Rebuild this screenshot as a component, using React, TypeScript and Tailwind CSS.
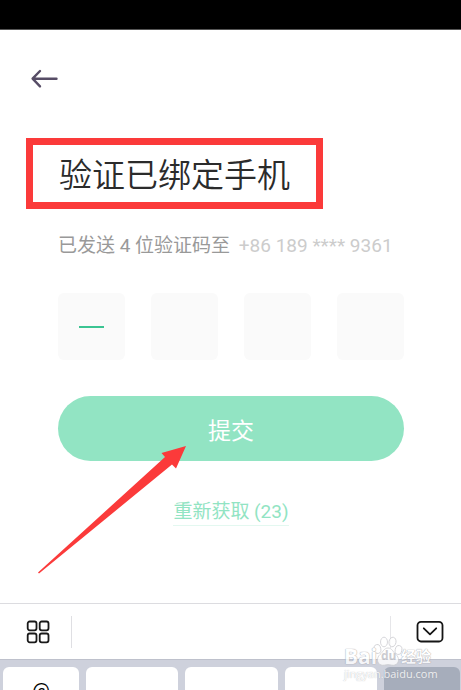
import React from 'react';

const digits = ['第一位', '第二位', '第三位', '第四位'];

function BackIcon() {
  return (
    <svg className="block h-5 w-7" viewBox="0 0 28 20" fill="none" stroke="#574d66" strokeWidth="2.4" strokeLinecap="round" strokeLinejoin="round">
      <path d="M10 2 2.600 9.700 10 17.400M3 9.700h23.500" />
    </svg>
  );
}

function GridIcon() {
  return (
    <svg className="block h-6 w-6" viewBox="0 0 24 24" fill="none" stroke="#1a1a1a" strokeWidth="1.8">
      <rect x="1.700" y="1.500" width="8.800" height="8.800" rx="2" />
      <rect x="13.700" y="1.500" width="8.800" height="8.800" rx="2" />
      <rect x="1.700" y="13.500" width="8.800" height="8.800" rx="2" />
      <rect x="13.700" y="13.500" width="8.800" height="8.800" rx="2" />
    </svg>
  );
}

function HideKeyboardIcon() {
  return (
    <svg className="block h-6 w-7" viewBox="0 0 28 24" fill="none" stroke="#151515" strokeWidth="1.8" strokeLinecap="round" strokeLinejoin="round">
      <rect x="1.500" y="1.800" width="25" height="19.700" rx="3.500" />
      <path d="M7.800 8.300 14 14.300l6.200-6" />
    </svg>
  );
}

function Pointer() {
  return (
    <svg className="pointer-events-none absolute top-[49px] -left-5 h-[130px] w-[150px]" viewBox="0 0 150 130" aria-hidden="true">
      <path d="M148 1 123.500 8 127 12 0 127.500 1 128.500 134 19.500 138 23.500Z" fill="#fb3a3a" />
    </svg>
  );
}

function Watermark() {
  return (
    <div className="pointer-events-none absolute top-[43px] right-[26px] w-[91px] font-['Open_Sans','Noto_Sans_CJK_SC',sans-serif] text-white opacity-80" aria-hidden="true">
      <svg className="absolute top-[-11px] left-[29px] h-[32px] w-[30px]" viewBox="0 0 30 32" fill="#ffffff" stroke="#c9c9ce" strokeWidth="0.9">
        <ellipse cx="4.500" cy="14" rx="3.300" ry="4.500" transform="rotate(-12 4.500 14)" />
        <ellipse cx="11" cy="7" rx="3.500" ry="4.800" />
        <ellipse cx="19.500" cy="7" rx="3.500" ry="4.800" transform="rotate(10 19.500 7)" />
        <ellipse cx="25.500" cy="15" rx="3.300" ry="4.500" transform="rotate(12 25.500 15)" />
        <path d="M15 13c4 0 5 4 8 6.500 3.500 3 3.500 9-1 10.500-2.500.8-4.500-.3-7-.3s-4.500 1.100-7 .3c-4.500-1.500-4.500-7.500-1-10.500C10 17 11 13 15 13Z" />
      </svg>
      <div className="relative grid h-5 grid-cols-[37px_20px_31px] items-center leading-5 font-bold [text-shadow:0_0_1px_#9a9aa2,0_0_1px_#9a9aa2]">
        <span className="text-[21px]">Bai</span>
        <span className="text-xs text-[#c0c0c6] [text-shadow:none]">du</span>
        <span className="text-[15px]">经验</span>
      </div>
      <div className="relative mt-0.5 text-[11px] leading-3 whitespace-nowrap [text-shadow:0_0_1px_#9a9aa2]">jingyan.baidu.com</div>
    </div>
  );
}

export default function App() {
  return (
    <div className="flex h-screen flex-col overflow-hidden bg-white font-['Roboto','Noto_Sans_CJK_SC',sans-serif]">
      <div className="h-[30px] shrink-0 border-b border-[#555555] bg-black" />

      <header className="flex h-[98px] shrink-0 items-center px-[30px]">
        <button type="button" aria-label="返回">
          <BackIcon />
        </button>
      </header>

      <main className="min-h-0 flex-1 pt-5 pr-[57px] pl-[58px]">
        <div className="relative w-fit px-px pt-[3px]">
          <h1 className="text-[33px] leading-[50px] font-[350] whitespace-nowrap text-[#2b2b2b]">验证已绑定手机</h1>
          <div className="pointer-events-none absolute -inset-x-8 top-[-10px] h-[71px] border-7 border-[#fb3a3a]" />
        </div>

        <p className="mt-[30px] text-[19px] leading-[30px] whitespace-nowrap text-[#999999]">
          已发送 4 位验证码至 <span className="ml-1 text-[#cccccc]">+86 189 **** 9361</span>
        </p>

        <form onSubmit={(e) => e.preventDefault()}>
          <div className="mt-8 grid grid-cols-4 gap-[26px]">
            {digits.map((name, i) => (
              <label key={name} className="relative block">
                <input
                  type="text"
                  inputMode="numeric"
                  maxLength={1}
                  aria-label={name}
                  className="block aspect-square w-full rounded-md bg-[#fafafa] text-center text-2xl text-[#333333] outline-none"
                />
                {i === 0 && <span className="absolute inset-x-[21px] top-[33px] h-0.5 bg-[#3bc492]" />}
              </label>
            ))}
          </div>

          <div className="relative mt-9">
            <button type="submit" className="h-[65px] w-full rounded-full bg-[#92e4c3] pt-2 text-[23px] text-white">
              提交
            </button>
            <Pointer />
          </div>
        </form>

        <div className="mt-9 text-center">
          <button type="button" className="border-b border-[#e3f8f0] pt-0.5 text-[19px] leading-[26px] whitespace-nowrap text-[#92e4c3]">
            重新获取 (23)
          </button>
        </div>
      </main>

      <section className="relative shrink-0" aria-label="键盘">
        <div className="flex h-14 items-center border-t border-[#dcdce0] pr-[17px] pl-[26px]">
          <button type="button" aria-label="更多">
            <GridIcon />
          </button>
          <span className="ml-[21px] h-8 w-px bg-[#dfdfe3]" />
          <span className="mr-[25px] ml-auto h-8 w-px bg-[#e6e6e9]" />
          <button type="button" aria-label="收起键盘">
            <HideKeyboardIcon />
          </button>
        </div>
        <div className="grid h-[31px] grid-cols-[76fr_92fr_92fr_92fr_76fr] gap-[7px] overflow-hidden border-t border-[#bec1cc] bg-[#ced1dc] pt-[7px] pr-px pl-[3px]">
          <button type="button" className="h-12 rounded-md bg-white text-xl text-black">@</button>
          <button type="button" aria-label="1" className="h-12 rounded-md bg-white" />
          <button type="button" aria-label="2" className="h-12 rounded-md bg-white" />
          <button type="button" aria-label="3" className="h-12 rounded-md bg-white" />
          <button type="button" aria-label="删除" className="h-12 rounded-md bg-[#a6adbb]" />
        </div>
        <Watermark />
      </section>
    </div>
  );
}
